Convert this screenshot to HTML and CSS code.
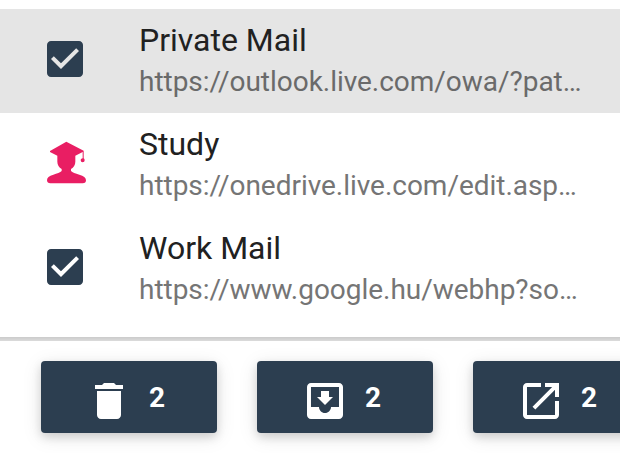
FILE: index.html
```html
<!DOCTYPE html>
<html lang="en">
<head>
<meta charset="utf-8">
<title>Bookmarks</title>
<link rel="stylesheet" href="styles.css">
</head>
<body>
<main class="panel">
  <ul class="list">
    <li class="item item-active">
      <svg class="icon" viewBox="0 0 24 24"><path fill="#2c3e50" d="M19 3H5c-1.110 0-2 .9-2 2v14c0 1.100.89 2 2 2h14c1.110 0 2-.9 2-2V5c0-1.100-.89-2-2-2zm-9 14l-5-5 1.410-1.410L10 14.170l7.590-7.590L19 8l-9 9z"/></svg>
      <div class="text"><div class="title">Private Mail</div><div class="url">https://outlook.live.com/owa/?pat…</div></div>
    </li>
    <li class="item">
      <svg class="study" viewBox="51 33 120 132"><path fill="#e91e63" d="M109 35L60 63v3l22 11v18c0 10 5 17 13 22v6c-4 5-14 7-25 11-13 4-19 9-19 17 0 6 4 9 10 9h97c7 0 10-4 10-9 0-8-7-13-20-17-12-4-21-6-25-11v-6c8-5 13-12 13-22V77l22-11v19c-4 1-6 3-6 6a6 6 0 0 0 12 0c0-3-1-5-3-6V62z"/></svg>
      <div class="text"><div class="title">Study</div><div class="url">https://onedrive.live.com/edit.asp…</div></div>
    </li>
    <li class="item">
      <svg class="icon" viewBox="0 0 24 24"><path fill="#2c3e50" d="M19 3H5c-1.110 0-2 .9-2 2v14c0 1.100.89 2 2 2h14c1.110 0 2-.9 2-2V5c0-1.100-.89-2-2-2zm-9 14l-5-5 1.410-1.410L10 14.170l7.590-7.590L19 8l-9 9z"/></svg>
      <div class="text"><div class="title">Work Mail</div><div class="url">https://www.google.hu/webhp?so…</div></div>
    </li>
  </ul>
  <footer class="actions">
    <button class="btn"><svg viewBox="0 0 24 24"><path d="M6 19c0 1.100.9 2 2 2h8c1.100 0 2-.9 2-2V7H6v12zM19 4h-3.500l-1-1h-5l-1 1H5v2h14V4z"/></svg><span>2</span></button>
    <button class="btn"><svg viewBox="0 0 24 24"><path d="M19 3H4.990c-1.110 0-1.980.9-1.980 2L3 19c0 1.100.88 2 1.990 2H19c1.100 0 2-.9 2-2V5c0-1.100-.9-2-2-2zm0 12h-4c0 1.660-1.350 3-3 3s-3-1.340-3-3H4.990V5H19v10zm-3-5h-2V7h-4v3H8l4 4 4-4z"/></svg><span>2</span></button>
    <button class="btn"><svg viewBox="0 0 24 24"><path d="M19 19H5V5h7V3H5c-1.110 0-2 .9-2 2v14c0 1.100.89 2 2 2h14c1.100 0 2-.9 2-2v-7h-2v7zM14 3v2h3.590l-9.830 9.830 1.410 1.410L19 6.410V10h2V3h-7z"/></svg><span>2</span></button>
  </footer>
</main>
</body>
</html>
```
FILE: styles.css
```css
* { box-sizing: border-box; }
body { margin: 0; background: #fff; font-family: Roboto, sans-serif; overflow: hidden; }
.panel { width: 620px; height: 453px; padding-top: 9px; overflow: hidden; }
.list { list-style: none; margin: 0; padding: 0; height: 332px; background: linear-gradient(#cbcbcb, #dbdbdb) bottom / 100% 4px no-repeat; }
.item { display: flex; align-items: center; height: 104px; padding-left: 41px; }
.item-active { background: #e5e5e5; }
.icon { width: 48px; height: 48px; margin-right: 50px; margin-top: -4px; }
.study { width: 40px; height: 44px; margin: 0 52px 4px 6px; }
.text { white-space: nowrap; padding-bottom: 2px; }
.title { font-size: 32px; line-height: 44px; color: #212121; }
.url { font-size: 28px; line-height: 40px; color: #757575; letter-spacing: -0.03px; }
.item-active .url { color: #6a6a6a; }
.actions { display: flex; gap: 40px; padding: 20px 0 0 41px; }
.btn { flex: 0 0 176px; height: 72px; padding: 0 0 0 44px; border: 0; border-radius: 4px; background: #2c3e50; color: #fff; display: flex; align-items: center; gap: 16px; font: 700 28px Roboto, sans-serif; box-shadow: 0 4px 20px rgba(0,0,0,.1), 0 4px 10px rgba(0,0,0,.14); }
.btn svg { width: 48px; height: 48px; margin-top: 8px; fill: #fff; }
```
